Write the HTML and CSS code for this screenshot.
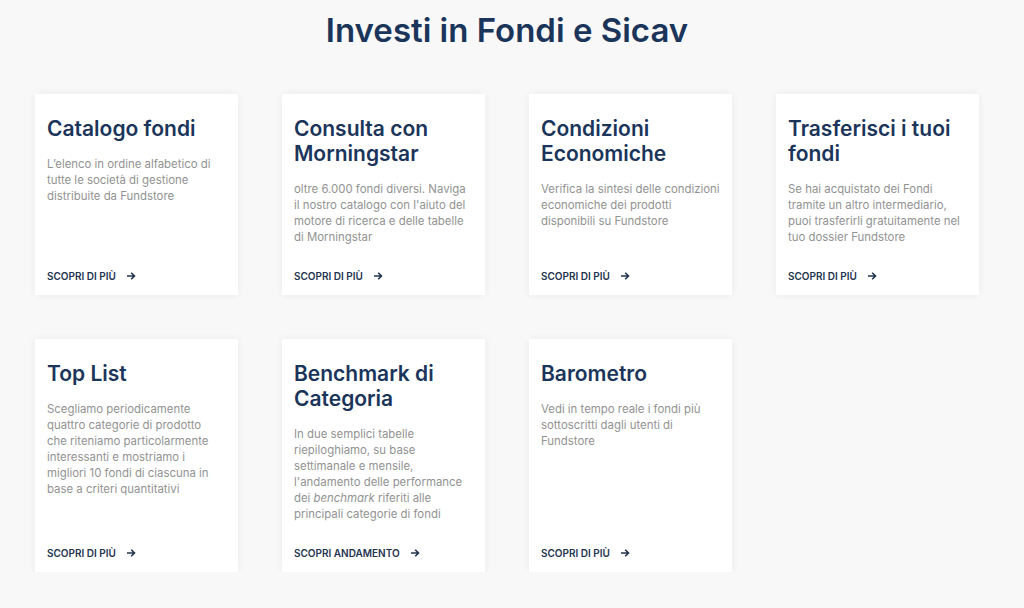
FILE: index.html
```html
<!DOCTYPE html>
<html lang="it">
<head>
<meta charset="utf-8">
<title>Investi in Fondi e Sicav</title>
<link rel="stylesheet" href="styles.css">
</head>
<body>
<main class="page">
  <h1 class="page-title">Investi in Fondi e Sicav</h1>
  <div class="grid">
    <article class="card">
      <h2 class="card-title">Catalogo fondi</h2>
      <p class="card-text">L’elenco in ordine alfabetico di<br>tutte le società di gestione<br>distribuite da Fundstore</p>
      <a class="card-link" href="#">SCOPRI DI PIÙ <svg class="arrow" viewBox="0 0 10 10" width="10" height="10"><path d="M1 5h7.5M5.2 1.8L8.5 5 5.2 8.2" fill="none" stroke="currentColor" stroke-width="1.6"/></svg></a>
    </article>
    <article class="card">
      <h2 class="card-title">Consulta con Morningstar</h2>
      <p class="card-text">oltre 6.000 fondi diversi. Naviga<br>il nostro catalogo con l'aiuto del<br>motore di ricerca e delle tabelle<br>di Morningstar</p>
      <a class="card-link" href="#">SCOPRI DI PIÙ <svg class="arrow" viewBox="0 0 10 10" width="10" height="10"><path d="M1 5h7.5M5.2 1.8L8.5 5 5.2 8.2" fill="none" stroke="currentColor" stroke-width="1.6"/></svg></a>
    </article>
    <article class="card">
      <h2 class="card-title">Condizioni Economiche</h2>
      <p class="card-text">Verifica la sintesi delle condizioni<br>economiche dei prodotti<br>disponibili su Fundstore</p>
      <a class="card-link" href="#">SCOPRI DI PIÙ <svg class="arrow" viewBox="0 0 10 10" width="10" height="10"><path d="M1 5h7.5M5.2 1.8L8.5 5 5.2 8.2" fill="none" stroke="currentColor" stroke-width="1.6"/></svg></a>
    </article>
    <article class="card">
      <h2 class="card-title">Trasferisci i tuoi fondi</h2>
      <p class="card-text">Se hai acquistato dei Fondi<br>tramite un altro intermediario,<br>puoi trasferirli gratuitamente nel<br>tuo dossier Fundstore</p>
      <a class="card-link" href="#">SCOPRI DI PIÙ <svg class="arrow" viewBox="0 0 10 10" width="10" height="10"><path d="M1 5h7.5M5.2 1.8L8.5 5 5.2 8.2" fill="none" stroke="currentColor" stroke-width="1.6"/></svg></a>
    </article>
    <article class="card">
      <h2 class="card-title">Top List</h2>
      <p class="card-text">Scegliamo periodicamente<br>quattro categorie di prodotto<br>che riteniamo particolarmente<br>interessanti e mostriamo i<br>migliori 10 fondi di ciascuna in<br>base a criteri quantitativi</p>
      <a class="card-link" href="#">SCOPRI DI PIÙ <svg class="arrow" viewBox="0 0 10 10" width="10" height="10"><path d="M1 5h7.5M5.2 1.8L8.5 5 5.2 8.2" fill="none" stroke="currentColor" stroke-width="1.6"/></svg></a>
    </article>
    <article class="card">
      <h2 class="card-title">Benchmark di Categoria</h2>
      <p class="card-text">In due semplici tabelle<br>riepiloghiamo, su base<br>settimanale e mensile,<br>l'andamento delle performance<br>dei <em>benchmark</em> riferiti alle<br>principali categorie di fondi</p>
      <a class="card-link" href="#">SCOPRI ANDAMENTO <svg class="arrow" viewBox="0 0 10 10" width="10" height="10"><path d="M1 5h7.5M5.2 1.8L8.5 5 5.2 8.2" fill="none" stroke="currentColor" stroke-width="1.6"/></svg></a>
    </article>
    <article class="card">
      <h2 class="card-title">Barometro</h2>
      <p class="card-text">Vedi in tempo reale i fondi più<br>sottoscritti dagli utenti di<br>Fundstore</p>
      <a class="card-link" href="#">SCOPRI DI PIÙ <svg class="arrow" viewBox="0 0 10 10" width="10" height="10"><path d="M1 5h7.5M5.2 1.8L8.5 5 5.2 8.2" fill="none" stroke="currentColor" stroke-width="1.6"/></svg></a>
    </article>
  </div>
</main>
</body>
</html>
```

FILE: styles.css
```css
* { box-sizing: border-box; }
html, body {
  margin: 0;
  padding: 0;
  background: #f8f8f8;
  font-family: Inter, "Noto Sans", "Liberation Sans", sans-serif;
}
.page {
  width: 944px;
  margin-left: 35px;
  padding-top: 10px;
}
.page-title {
  margin: 0 0 44px;
  font-size: 33px;
  line-height: 40px;
  font-weight: 600;
  color: #1b355a;
  text-align: center;
}
.grid {
  display: grid;
  grid-template-columns: repeat(4, 203px);
  column-gap: 44px;
  row-gap: 44px;
}
.card {
  background: #fff;
  box-shadow: 0 0 8px rgba(0, 0, 0, 0.06);
  padding: 22px 5px 12px 12px;
  display: flex;
  flex-direction: column;
}
.card-title {
  margin: 0 7px 15px 0;
  font-size: 21px;
  line-height: 25px;
  font-weight: 600;
  color: #1b355a;
}
.card-text {
  margin: 0 0 24px;
  font-size: 11.4px;
  line-height: 16px;
  color: #929292;
}
.card-text em { font-style: italic; }
.card-link {
  margin-top: auto;
  display: flex;
  align-items: center;
  gap: 10px;
  font-size: 10px;
  line-height: 14px;
  font-weight: 600;
  color: #23344f;
  text-decoration: none;
}
.arrow { display: block; }
```
